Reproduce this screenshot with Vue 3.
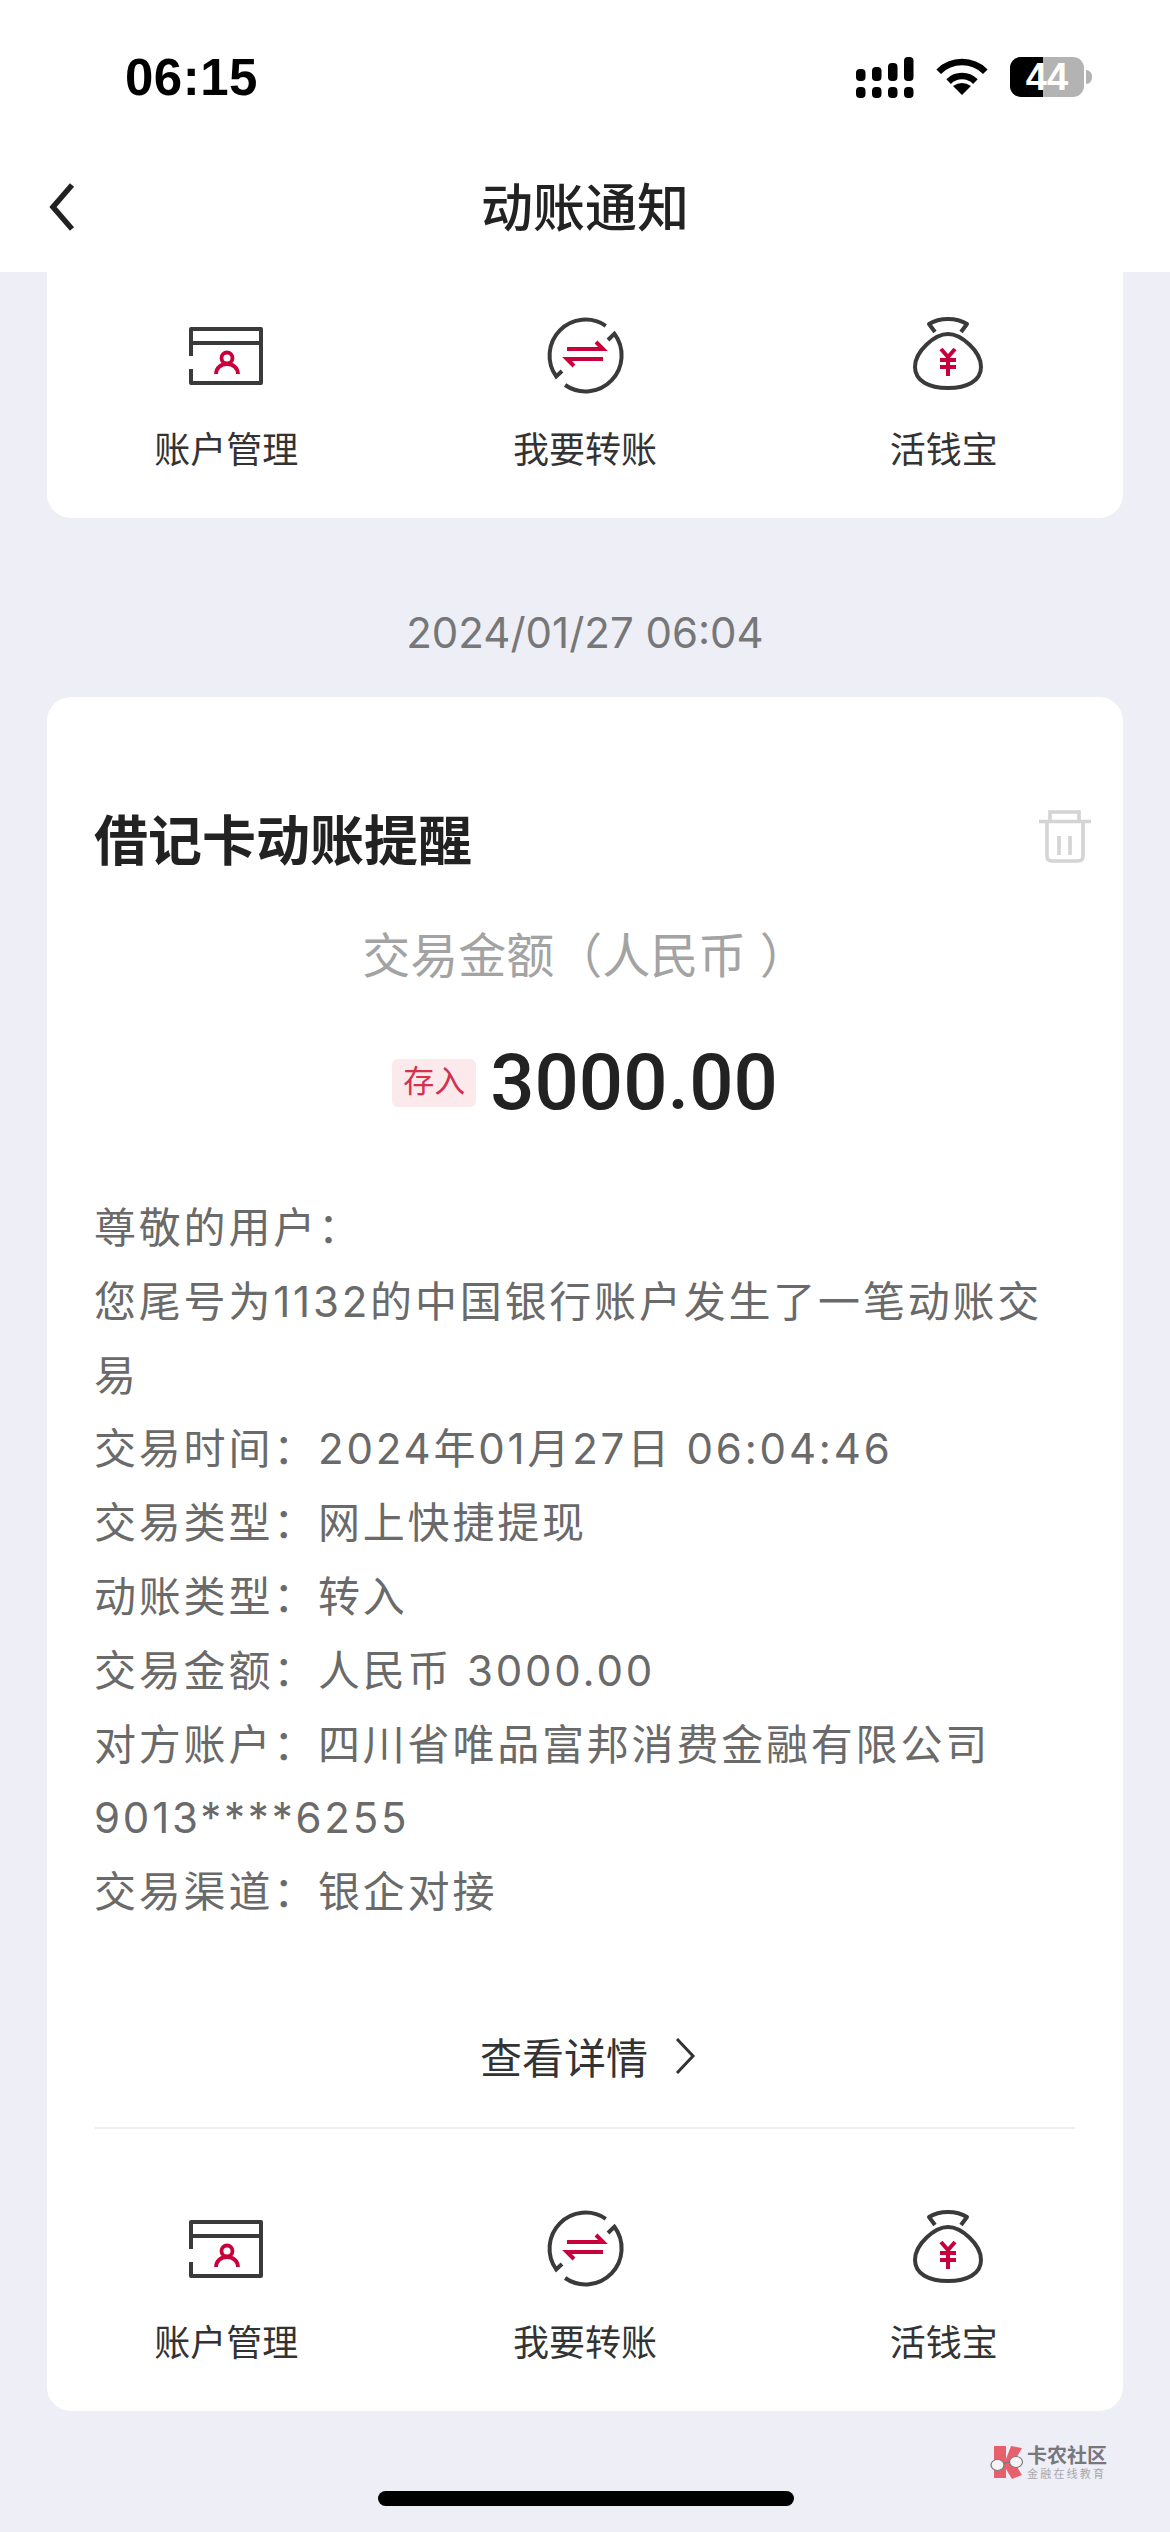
<template>
  <div class="page">
    <svg class="defs" width="0" height="0">
      <symbol id="ic-account" viewBox="0 0 90 90">
        <path d="M10 45V18H80V72H10V58M10 32H80" fill="none" stroke="#3a3a3a" stroke-width="4" stroke-linejoin="round" />
        <circle cx="46" cy="47" r="5.5" fill="none" stroke="#c8003c" stroke-width="3.8" />
        <path d="M35 63c0-6 5-10 11-10s11 4 11 10" fill="none" stroke="#c8003c" stroke-width="3.8" />
      </symbol>
      <symbol id="ic-transfer" viewBox="0 0 90 90">
        <path d="M65.8 14.8A36 36 0 0 0 16.2 65.4L22 60" fill="none" stroke="#3a3a3a" stroke-width="4" />
        <path d="M25.1 74A36 36 0 0 0 74.4 22.8L68 29" fill="none" stroke="#3a3a3a" stroke-width="4" />
        <path d="M27 38H63L56 31M63 48H27L34 55" fill="none" stroke="#c8003c" stroke-width="4" />
      </symbol>
      <symbol id="ic-bag" viewBox="0 0 90 90">
        <path d="M36 21L30 13Q38 8 49 8Q60 8 68 13L62 21" fill="none" stroke="#3a3a3a" stroke-width="4" stroke-linejoin="round" />
        <path d="M49 23C36 23 16 40 16 56C16 70 30 77 49 77C68 77 82 70 82 56C82 40 62 23 49 23Z" fill="none" stroke="#3a3a3a" stroke-width="4" />
        <path d="M42 38L49 46L56 38M49 46V65M41 49H57M41 56H57" fill="none" stroke="#c8003c" stroke-width="4" />
      </symbol>
    </svg>

    <div class="status-bar">
      <span class="time">06:15</span>
      <div class="status-icons">
        <svg width="58" height="41" viewBox="0 0 58 41">
          <rect x="0" y="12" width="9.5" height="12" rx="4" />
          <rect x="16" y="10" width="9.5" height="14" rx="4" />
          <rect x="32" y="6" width="9.5" height="18" rx="4" />
          <rect x="48" y="0" width="9.5" height="24" rx="4" />
          <rect x="0" y="30" width="9.5" height="11" rx="4" />
          <rect x="16" y="30" width="9.5" height="11" rx="4" />
          <rect x="32" y="30" width="9.5" height="11" rx="4" />
          <rect x="48" y="30" width="9.5" height="11" rx="4" />
        </svg>
        <svg width="52" height="38" viewBox="0 0 52 38">
          <path d="M2.7 13.7A33 33 0 0 1 49.3 13.7M12.6 23.6A19 19 0 0 1 39.4 23.6" fill="none" stroke="#000" stroke-width="6.5" />
          <path d="M26 37L17 28Q26 22 35 28Z" />
        </svg>
        <div class="battery">
          <div class="battery-body">
            <div class="battery-fill"></div>
            <span class="battery-num">44</span>
          </div>
          <div class="battery-cap"></div>
        </div>
      </div>
    </div>

    <header class="nav">
      <svg class="back" width="28" height="48" viewBox="0 0 28 48">
        <path d="M24 2L5 24L24 46" fill="none" stroke="#222" stroke-width="5.5" />
      </svg>
      <h1>动账通知</h1>
    </header>

    <main class="content">
      <section class="card card-top">
        <div class="tools">
          <div class="tool" v-for="t in tools" :key="t.icon">
            <svg width="90" height="90"><use :href="'#' + t.icon" /></svg>
            <span>{{ t.name }}</span>
          </div>
        </div>
      </section>

      <div class="date">2024/01/27 06:04</div>

      <section class="card card-main">
        <div class="title-row">
          <h2>借记卡动账提醒</h2>
          <svg class="trash" width="54" height="54" viewBox="0 0 54 54">
            <path d="M12 11V2H41V11M1 11.5H53M9 12V46Q9 51 14 51H40Q45 51 45 46V12M21 26V45M32 26V45" fill="none" stroke="#d4d4d4" stroke-width="3.6" />
          </svg>
        </div>
        <div class="amount-label">交易金额（人民币 ）</div>
        <div class="amount-row">
          <span class="badge">存入</span>
          <span class="amount">3000.00</span>
        </div>
        <div class="detail">
          <div v-for="line in lines" :key="line">{{ line }}</div>
        </div>
        <div class="more">
          <span>查看详情</span>
          <svg width="22" height="38" viewBox="0 0 22 38">
            <path d="M3 2L19 19L3 36" fill="none" stroke="#333" stroke-width="3" />
          </svg>
        </div>
        <div class="divider"></div>
        <div class="tools">
          <div class="tool" v-for="t in tools" :key="t.icon">
            <svg width="90" height="90"><use :href="'#' + t.icon" /></svg>
            <span>{{ t.name }}</span>
          </div>
        </div>
      </section>
    </main>

    <div class="watermark">
      <svg width="36" height="36" viewBox="0 0 36 36">
        <path d="M5 1H17V14L22 1L33 3L25 17L33 30L23 34L17 24V33H5Z" fill="#e8606c" />
        <path d="M14.5 19Q18 16.5 21 17.5" fill="none" stroke="#77777c" stroke-width="1.2" />
        <ellipse cx="8.5" cy="20" rx="6.5" ry="5.5" fill="#f6f4f5" stroke="#77777c" stroke-width="1.2" />
        <ellipse cx="27" cy="17" rx="6.5" ry="5.5" fill="#f6f4f5" stroke="#77777c" stroke-width="1.2" />
      </svg>
      <div class="wm-text">
        <div class="wm-name">卡农社区</div>
        <div class="wm-sub">金融在线教育</div>
      </div>
    </div>
    <div class="home-bar"></div>
  </div>
</template>

<script setup>
const tools = [
  { icon: 'ic-account', name: '账户管理' },
  { icon: 'ic-transfer', name: '我要转账' },
  { icon: 'ic-bag', name: '活钱宝' },
]

const lines = [
  '尊敬的用户：',
  '您尾号为1132的中国银行账户发生了一笔动账交易',
  '交易时间：2024年01月27日 06:04:46',
  '交易类型：网上快捷提现',
  '动账类型：转入',
  '交易金额：人民币 3000.00',
  '对方账户：四川省唯品富邦消费金融有限公司 9013****6255',
  '交易渠道：银企对接',
]
</script>

<style>
body {
  background: #eeeef6;
}
</style>

<style scoped>
.page {
  position: relative;
  width: 1170px;
  height: 2532px;
  overflow: hidden;
  background: #eeeef6;
  font-family: "Liberation Sans", "Noto Sans CJK SC", sans-serif;
  color: #222;
}
.defs {
  position: absolute;
}
.status-bar {
  box-sizing: border-box;
  height: 146px;
  padding: 8px 78px 0 125px;
  display: flex;
  align-items: center;
  justify-content: space-between;
  background: #fff;
}
.time {
  font-size: 51px;
  font-weight: 700;
  color: #000;
  letter-spacing: 0.5px;
}
.status-icons {
  display: flex;
  align-items: center;
  gap: 22px;
}
.battery {
  display: flex;
  align-items: center;
  gap: 2px;
}
.battery-body {
  position: relative;
  width: 74px;
  height: 40px;
  border-radius: 11px;
  overflow: hidden;
  background: #b3b3b3;
  display: flex;
  align-items: center;
  justify-content: center;
}
.battery-fill {
  position: absolute;
  left: 0;
  top: 0;
  bottom: 0;
  width: 33px;
  background: #000;
}
.battery-num {
  position: relative;
  font-size: 38px;
  font-weight: 700;
  line-height: 38px;
  color: #fff;
}
.battery-cap {
  width: 6px;
  height: 14px;
  border-radius: 0 7px 7px 0;
  background: #b3b3b3;
}
.nav {
  position: relative;
  height: 126px;
  display: flex;
  align-items: center;
  justify-content: center;
  background: #fff;
}
.nav h1 {
  margin: 0;
  font-size: 52px;
  font-weight: 500;
  line-height: 122px;
  color: #222;
}
.back {
  position: absolute;
  left: 48px;
  top: 37px;
}
.content {
  padding: 0 47px;
}
.card {
  background: #fff;
  border-radius: 24px;
}
.card-top {
  padding: 39px 0 42px;
  border-radius: 0 0 24px 24px;
}
.tools {
  display: grid;
  grid-template-columns: repeat(3, 1fr);
}
.tool {
  display: flex;
  flex-direction: column;
  align-items: center;
  gap: 25px;
  font-size: 36px;
  line-height: 50px;
  color: #333;
}
.date {
  margin: 85px 0 34px;
  text-align: center;
  font-family: Inter, "Noto Sans CJK SC", sans-serif;
  font-size: 42px;
  line-height: 60px;
  color: #777;
}
.card-main {
  padding: 110px 0 42px;
}
.title-row {
  padding: 0 31px 0 47px;
  display: flex;
  align-items: flex-start;
  justify-content: space-between;
}
.title-row h2 {
  margin: 0;
  font-size: 54px;
  font-weight: 700;
  line-height: 70px;
  color: #222;
}
.trash {
  margin-top: 3px;
}
.amount-label {
  margin-top: 50px;
  text-align: center;
  font-size: 48px;
  line-height: 60px;
  color: #a3a3a3;
}
.amount-row {
  margin-top: 56px;
  height: 80px;
  display: flex;
  align-items: center;
  justify-content: center;
  gap: 14px;
}
.badge {
  width: 84px;
  height: 48px;
  border-radius: 6px;
  background: #fbe9ec;
  color: #d6304f;
  font-size: 31px;
  line-height: 46px;
  text-align: center;
}
.amount {
  font-family: Roboto, sans-serif;
  font-size: 78px;
  font-weight: 500;
  line-height: 80px;
  color: #222;
}
.detail {
  margin-top: 68px;
  padding: 0 47px;
  font-family: Inter, "Noto Sans CJK SC", sans-serif;
  font-size: 42px;
  line-height: 73.8px;
  letter-spacing: 2.8px;
  color: #6a6a6a;
}
.more {
  margin-top: 97px;
  height: 60px;
  display: flex;
  align-items: center;
  justify-content: center;
  gap: 26px;
  padding-left: 6px;
  font-size: 42px;
  color: #333;
}
.divider {
  margin: 41px 48px 0;
  height: 2px;
  background: #eeeeee;
}
.card-main .tools {
  margin-top: 75px;
}
.watermark {
  position: absolute;
  left: 989px;
  top: 2445px;
  display: flex;
  gap: 2px;
}
.wm-name {
  font-size: 20px;
  font-weight: 700;
  line-height: 22px;
  color: #77777c;
}
.wm-sub {
  margin-top: 1px;
  font-size: 11px;
  line-height: 13px;
  letter-spacing: 2.2px;
  color: #a8a8ac;
}
.home-bar {
  position: absolute;
  left: 378px;
  top: 2491px;
  width: 416px;
  height: 15px;
  border-radius: 8px;
  background: #000;
}
</style>
